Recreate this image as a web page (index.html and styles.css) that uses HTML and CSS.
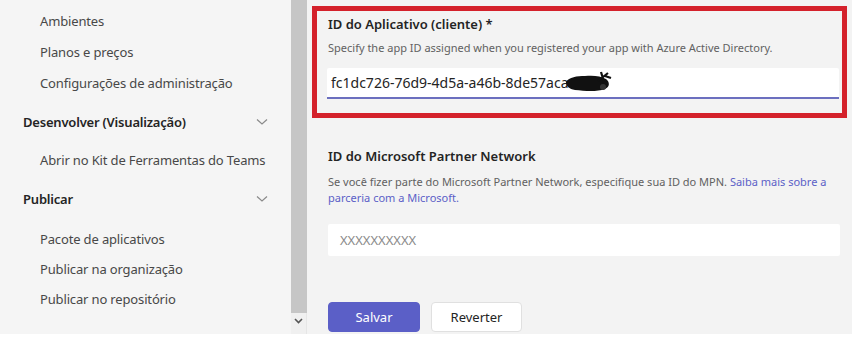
FILE: index.html
```html
<!DOCTYPE html>
<html lang="pt">
<head>
<meta charset="utf-8">
<link rel="stylesheet" href="styles.css">
</head>
<body>
<div class="app">
  <nav class="sidebar">
    <div class="item">Ambientes</div>
    <div class="item">Planos e preços</div>
    <div class="item">Configurações de administração</div>
    <div class="group">
      <span>Desenvolver (Visualização)</span>
      <svg class="chev" width="12" height="8" viewBox="0 0 12 8"><path d="M1 1.5 L6 6 L11 1.5" fill="none" stroke="#8a8a8a" stroke-width="1.2"/></svg>
    </div>
    <div class="item">Abrir no Kit de Ferramentas do Teams</div>
    <div class="group">
      <span>Publicar</span>
      <svg class="chev" width="12" height="8" viewBox="0 0 12 8"><path d="M1 1.5 L6 6 L11 1.5" fill="none" stroke="#8a8a8a" stroke-width="1.2"/></svg>
    </div>
    <div class="sub">
      <div class="item">Pacote de aplicativos</div>
      <div class="item">Publicar na organização</div>
      <div class="item">Publicar no repositório</div>
    </div>
  </nav>
  <div class="scroll">
    <div class="thumb"></div>
    <svg class="scroll-arrow" width="9" height="6" viewBox="0 0 9 6"><path d="M1 1 L4.5 4.5 L8 1" fill="none" stroke="#555" stroke-width="1.6"/></svg>
  </div>
  <main class="main">
    <section class="field highlight">
      <div class="label">ID do Aplicativo (cliente) *</div>
      <div class="desc">Specify the app ID assigned when you registered your app with Azure Active Directory.</div>
      <div class="input active">
        <span>fc1dc726-76d9-4d5a-a46b-8de57aca</span>
        <svg class="scribble" width="48" height="24" viewBox="0 0 48 24"><path d="M1 12 C4 7 12 6 20 6 C28 5 36 6 41 9 C45 12 45 17 40 19 C32 22 20 21 10 20 C4 19 1 16 1 12 Z" fill="#111"/><path d="M36 2 L39 12 M43 3 L33 11 M40 6 L46 8" stroke="#111" stroke-width="2.2" fill="none"/><circle cx="38" cy="17" r="3" fill="#333"/></svg>
      </div>
    </section>
    <section class="field second">
      <div class="label">ID do Microsoft Partner Network</div>
      <p class="desc">Se você fizer parte do Microsoft Partner Network, especifique sua ID do MPN. <a class="link">Saiba mais sobre a</a><br><a class="link">parceria com a Microsoft.</a></p>
      <div class="input"><span class="ph">XXXXXXXXXX</span></div>
    </section>
    <div class="actions">
      <button class="btn primary">Salvar</button>
      <button class="btn secondary">Reverter</button>
    </div>
  </main>
</div>
</body>
</html>
```

FILE: styles.css
```css
* { box-sizing: border-box; }
html, body { margin: 0; padding: 0; }
body {
  width: 852px;
  height: 340px;
  overflow: hidden;
  background: #ffffff;
  font-family: "Segoe UI", "Noto Sans", "Open Sans", sans-serif;
  color: #242424;
}
.app {
  display: flex;
  height: 334px;
  background: #f4f4f4;
}
.sidebar {
  width: 291px;
  flex: none;
  padding-top: 6px;
  padding-right: 23px;
  background: #f5f5f5;
}
.item {
  height: 31px;
  line-height: 31px;
  padding-left: 40px;
  font-size: 13px;
  letter-spacing: -0.15px;
  color: #484848;
  white-space: nowrap;
}
.group {
  height: 46px;
  display: flex;
  align-items: center;
  justify-content: space-between;
  padding-left: 23px;
  font-size: 13px;
  letter-spacing: -0.2px;
  font-weight: 600;
  color: #242424;
}
.sub { padding-top: 2px; }
.sub .item { height: 30px; line-height: 30px; }
.scroll {
  width: 16px;
  flex: none;
  display: flex;
  flex-direction: column;
  align-items: center;
  background: #f0f0f0;
  border-right: 1px solid #e6e6e6;
}
.thumb {
  width: 16px;
  height: 313px;
  background: #c6c6c6;
}
.scroll-arrow { margin-top: 5px; }
.main {
  flex: 1;
  padding: 6px 5px 0 5px;
  background: #f3f3f3;
}
.field.highlight {
  border: 5px solid #d4212b;
  padding: 4px 3px 14px 11px;
  height: 112px;
}
.label {
  font-size: 13px;
  line-height: 18px;
  font-weight: 600;
  color: #242424;
}
.desc {
  margin: 7px 0 0 0;
  font-size: 11px;
  line-height: 16px;
  color: #616161;
}
.link { color: #5b5fc7; }
.input {
  display: flex;
  align-items: center;
  margin-top: 12px;
  margin-left: -1px;
  height: 31px;
  background: #ffffff;
  padding-left: 4px;
  font-size: 14px;
  color: #242424;
  border-radius: 2px;
}
.input.active {
  border-bottom: 2px solid #6b6fbf;
  border-radius: 2px 2px 0 0;
}
.scribble { margin-left: -3px; margin-top: -2px; }
.second {
  padding: 29px 7px 0 16px;
}
.second .desc { margin-top: 9px; }
.second .input {
  margin-top: 18px;
  margin-left: 0;
  height: 32px;
  padding-left: 12px;
}
.ph { color: #8a8a8a; font-size: 13px; }
.actions {
  display: flex;
  gap: 11px;
  padding: 46px 0 0 16px;
}
.btn {
  font-family: inherit;
  font-size: 13px;
  height: 30px;
  width: 92px;
  border-radius: 4px;
}
.primary {
  background: #5b5fc7;
  border: 1px solid #5b5fc7;
  color: #ffffff;
}
.secondary {
  background: #ffffff;
  border: 1px solid #e0e0e0;
  color: #242424;
  width: 91px;
}
```
